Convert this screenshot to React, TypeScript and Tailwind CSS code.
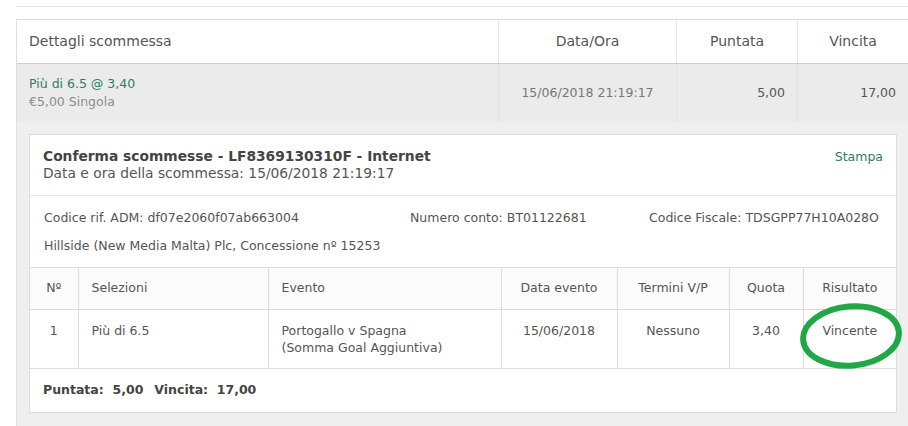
import React from 'react';

const font = { fontFamily: '"DejaVu Sans", Verdana, sans-serif' };

function Ellipse() {
  return (
    <svg
      className="absolute left-[-6px] top-[-8px] pointer-events-none"
      width="106"
      height="68"
      viewBox="0 0 106 68"
    >
      <ellipse
        cx="53"
        cy="34"
        rx="48"
        ry="29.5"
        fill="none"
        stroke="#22a746"
        strokeWidth="6"
        transform="rotate(-5 53 34)"
      />
    </svg>
  );
}

export default function App() {
  return (
    <div className="w-[908px] h-[426px] overflow-hidden bg-white text-[#555]" style={font}>
      <div className="ml-4 mt-[6px] border-t border-[#e6e6e6]" />
      <div className="ml-4 mt-3 border-l border-t border-[#dedede]">
        {/* header row */}
        <div className="flex h-[44px] items-center border-b border-[#cfcfcf] bg-white text-[14px] text-[#555]">
          <div className="w-[481px] pl-[12px]">Dettagli scommessa</div>
          <div className="flex h-full w-[178px] items-center justify-center border-l border-[#e6e6e6]">Data/Ora</div>
          <div className="flex h-full w-[121px] items-center justify-center border-l border-[#e6e6e6]">Puntata</div>
          <div className="flex h-full flex-1 items-center justify-center border-l border-[#e6e6e6]">Vincita</div>
        </div>
        {/* summary row */}
        <div className="flex h-[58px] items-center bg-[#ebebeb] text-[12.5px]">
          <div className="w-[481px] pl-[12px] leading-[18px]">
            <div className="text-[#2f7d5e]">Più di 6.5 @ 3,40</div>
            <div className="text-[#8d8d8d]">€5,00 Singola</div>
          </div>
          <div className="flex h-full w-[178px] items-center justify-center border-l border-[#e2e2e2] text-[#777]">15/06/2018 21:19:17</div>
          <div className="flex h-full w-[121px] items-center justify-end border-l border-[#e2e2e2] pr-[12px] text-[#555]">5,00</div>
          <div className="flex h-full flex-1 items-center justify-end border-l border-[#e2e2e2] pr-[12px] text-[#555]">17,00</div>
        </div>
        {/* details */}
        <div className="bg-[#efefef] pl-[12px] pr-[11px] pt-[12px] pb-[14px]">
          <div className="border border-[#dcdcdc] bg-white text-[12.5px]">
            <div className="flex items-start justify-between px-[13px] pt-[13px] pb-[13px] border-b border-[#e4e4e4] leading-[17px]">
              <div>
                <div className="font-bold text-[13.8px] text-[#444]">Conferma scommesse - LF8369130310F - Internet</div>
                <div className="text-[13.8px] text-[#555]">Data e ora della scommessa: 15/06/2018 21:19:17</div>
              </div>
              <div className="text-[#2f7d5e]">Stampa</div>
            </div>
            <div className="px-[14px] pt-[13px] pb-[13px] leading-[17px] text-[#555]">
              <div className="grid grid-cols-[366px_239px_1fr]">
                <div>Codice rif. ADM: df07e2060f07ab663004</div>
                <div>Numero conto: BT01122681</div>
                <div>Codice Fiscale: TDSGPP77H10A028O</div>
              </div>
              <div className="mt-[11px]">Hillside (New Media Malta) Plc, Concessione nº 15253</div>
            </div>
            <table className="w-full border-collapse text-[12.5px] text-[#555]">
              <thead>
                <tr className="h-[42px] border-t border-b border-[#dcdcdc] bg-[#fbfbfb]">
                  <th className="w-[48px] font-normal text-center">Nº</th>
                  <th className="w-[190px] border-l border-[#dcdcdc] pl-[13px] font-normal text-left">Selezioni</th>
                  <th className="w-[233px] border-l border-[#dcdcdc] pl-[13px] font-normal text-left">Evento</th>
                  <th className="w-[116px] border-l border-[#dcdcdc] font-normal text-center">Data evento</th>
                  <th className="w-[112px] border-l border-[#dcdcdc] font-normal text-center">Termini V/P</th>
                  <th className="w-[74px] border-l border-[#dcdcdc] font-normal text-center">Quota</th>
                  <th className="border-l border-[#dcdcdc] font-normal text-center">Risultato</th>
                </tr>
              </thead>
              <tbody>
                <tr className="h-[59px] border-b border-[#dcdcdc] align-top leading-[17px]">
                  <td className="pt-[12px] text-center">1</td>
                  <td className="border-l border-[#dcdcdc] pl-[13px] pt-[12px]">Più di 6.5</td>
                  <td className="border-l border-[#dcdcdc] pl-[13px] pt-[12px]">
                    Portogallo v Spagna
                    <br />
                    (Somma Goal Aggiuntiva)
                  </td>
                  <td className="border-l border-[#dcdcdc] pt-[12px] text-center">15/06/2018</td>
                  <td className="border-l border-[#dcdcdc] pt-[12px] text-center">Nessuno</td>
                  <td className="border-l border-[#dcdcdc] pt-[12px] text-center">3,40</td>
                  <td className="relative border-l border-[#dcdcdc] pt-[12px] text-center">
                    Vincente
                    <Ellipse />
                  </td>
                </tr>
              </tbody>
            </table>
            <div className="h-[43px] flex items-center pl-[13px] font-bold text-[12.5px] text-[#444]">
              <span>Puntata:&nbsp; 5,00</span>
              <span className="ml-[11px]">Vincita:&nbsp; 17,00</span>
            </div>
          </div>
        </div>
      </div>
    </div>
  );
}
